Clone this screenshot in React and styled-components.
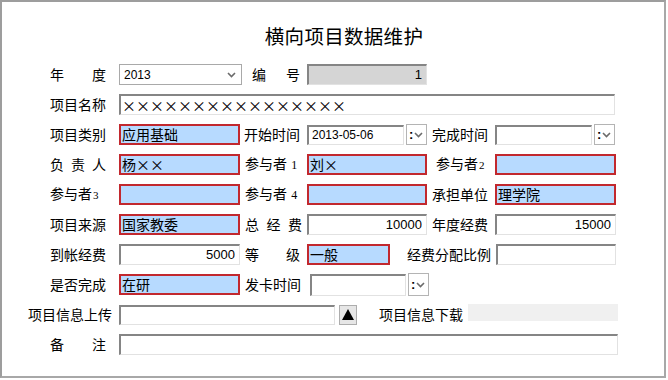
import React from "react";
import styled, { createGlobalStyle } from "styled-components";

const GlobalStyle = createGlobalStyle`
  body {
    margin: 0;
    background: #ffffff;
    font-family: "Noto Sans CJK SC", "Liberation Sans", sans-serif;
  }
`;

const Chevron = () => (
  <svg width="9" height="6" viewBox="0 0 9 6">
    <path d="M1 1 L4.5 4.5 L8 1" fill="none" stroke="#6b6b6b" strokeWidth="1.6" />
  </svg>
);

function App() {
  return (
    <>
      <GlobalStyle />
      <Frame>
        <Title>横向项目数据维护</Title>
        <Form>
          <Row>
            <Label $ml={48} $spread>
              <span>年</span>
              <span>度</span>
            </Label>
            <Select $ml={13} $w={123}>
              <span>2013</span>
              <Chevron />
            </Select>
            <Label $ml={10} $w={48} $spread>
              <span>编</span>
              <span>号</span>
            </Label>
            <Field $ml={7} $w={120} $num $tone="grey" readOnly defaultValue="1" />
          </Row>

          <Row>
            <Label $ml={48}>项目名称</Label>
            <Field $ml={13} $w={496} $cross readOnly defaultValue="××××××××××××××××" />
          </Row>

          <Row>
            <Label $ml={48}>项目类别</Label>
            <Field $ml={13} $tone="blue" readOnly defaultValue="应用基础" />
            <Label $ml={4}>开始时间</Label>
            <Field $ml={7} $w={97} $h={20} $date readOnly defaultValue="2013-05-06" />
            <DropButton $ml={2}>
              <span>:</span>
              <Chevron />
            </DropButton>
            <Label $ml={5}>完成时间</Label>
            <Field $ml={7} $w={97} $h={20} readOnly defaultValue="" />
            <DropButton $ml={2}>
              <span>:</span>
              <Chevron />
            </DropButton>
          </Row>

          <Row>
            <Label $ml={48} $spread>
              <span>负</span>
              <span>责</span>
              <span>人</span>
            </Label>
            <Field $ml={13} $tone="blue" $cross readOnly defaultValue="杨××" />
            <Label $ml={5} $w={55}>
              参与者 <Digit $size={12}>1</Digit>
            </Label>
            <Field $ml={7} $w={120} $tone="blue" $cross readOnly defaultValue="刘×" />
            <Label $ml={9} $w={52}>
              参与者<Digit>2</Digit>
            </Label>
            <Field $ml={7} $tone="blue" readOnly defaultValue="" />
          </Row>

          <Row>
            <Label $ml={48}>
              参与者<Digit>3</Digit>
            </Label>
            <Field $ml={13} $tone="blue" readOnly defaultValue="" />
            <Label $ml={5} $w={55}>
              参与者 <Digit $size={12}>4</Digit>
            </Label>
            <Field $ml={7} $w={120} $tone="blue" readOnly defaultValue="" />
            <Label $ml={5}>承担单位</Label>
            <Field $ml={7} $tone="blue" readOnly defaultValue="理学院" />
          </Row>

          <Row>
            <Label $ml={48}>项目来源</Label>
            <Field $ml={13} $tone="blue" readOnly defaultValue="国家教委" />
            <Label $ml={5} $w={57} $spread>
              <span>总</span>
              <span>经</span>
              <span>费</span>
            </Label>
            <Field $ml={5} $w={120} $num readOnly defaultValue="10000" />
            <Label $ml={5}>年度经费</Label>
            <Field $ml={7} $num readOnly defaultValue="15000" />
          </Row>

          <Row>
            <Label $ml={48}>到帐经费</Label>
            <Field $ml={13} $num readOnly defaultValue="5000" />
            <Label $ml={5} $w={55} $spread>
              <span>等</span>
              <span>级</span>
            </Label>
            <Field $ml={7} $w={83} $tone="blue" readOnly defaultValue="一般" />
            <Label $ml={17} $w={84}>经费分配比例</Label>
            <Field $ml={5} $w={120} readOnly defaultValue="" />
          </Row>

          <Row>
            <Label $ml={48}>是否完成</Label>
            <Field $ml={13} $tone="blue" readOnly defaultValue="在研" />
            <Label $ml={5} $w={57}>发卡时间</Label>
            <Field $ml={8} $w={96} $h={22} readOnly defaultValue="" />
            <DropButton $ml={2} $h={23}>
              <span>:</span>
              <Chevron />
            </DropButton>
          </Row>

          <Row>
            <Label $ml={26} $w={86}>项目信息上传</Label>
            <Field $ml={5} $w={216} $h={20} readOnly defaultValue="" />
            <UploadButton $ml={4}>
              <svg width="12" height="11" viewBox="0 0 12 11">
                <path d="M6 0 L12 11 L0 11 Z" fill="#000" />
              </svg>
            </UploadButton>
            <Label $ml={22} $w={84}>项目信息下载</Label>
            <Placeholder $ml={5} />
          </Row>

          <Row>
            <Label $ml={48} $spread>
              <span>备</span>
              <span>注</span>
            </Label>
            <Field $ml={13} $w={499} readOnly defaultValue="" />
          </Row>
        </Form>
      </Frame>
    </>
  );
}

const Frame = styled.div`
  width: 666px;
  height: 378px;
  box-sizing: border-box;
  border: 2px solid #9d9d9d;
  border-right-color: #a8a8a8;
  border-bottom-color: #a8a8a8;
  background: #ffffff;
  color: #000000;
`;

const Title = styled.h1`
  margin: 24px 0 0 22px;
  font-size: 19.5px;
  line-height: 20px;
  font-weight: 400;
  text-align: center;
  letter-spacing: 0.3px;
`;

const Form = styled.div`
  margin-top: 18px;
  display: flex;
  flex-direction: column;
  gap: 9px;
`;

const Row = styled.div`
  height: 21px;
  display: flex;
  align-items: center;
`;

const Label = styled.div`
  flex: none;
  margin-left: ${(p) => p.$ml || 0}px;
  width: ${(p) => p.$w || 56}px;
  display: ${(p) => (p.$spread ? "flex" : "block")};
  justify-content: space-between;
  font-size: 14px;
  line-height: 21px;
  white-space: pre;
`;

const Digit = styled.span`
  font-family: "Liberation Serif", serif;
  font-size: ${(p) => p.$size || 11}px;
  margin-left: 1px;
`;

const tones = {
  white: "#ffffff",
  grey: "#d5d5d5",
  blue: "#b7daff",
};

const Field = styled.input`
  flex: none;
  box-sizing: border-box;
  margin: 0 0 0 ${(p) => p.$ml || 0}px;
  width: ${(p) => p.$w || 121}px;
  height: ${(p) => p.$h || 21}px;
  padding: 0 ${(p) => (p.$num ? 4 : 1)}px 1px ${(p) => (p.$date ? 3 : 1)}px;
  background: ${(p) => tones[p.$tone || "white"]};
  border-style: solid;
  border-width: ${(p) => (p.$tone === "blue" ? "2px" : "2px 1px 1px 2px")};
  border-color: ${(p) =>
    p.$tone === "blue"
      ? "#c2282e"
      : "#858585 #e2e2e2 #e2e2e2 #858585"};
  color: #000000;
  outline: none;
  font-family: ${(p) =>
    p.$num || p.$date
      ? `"Liberation Sans", sans-serif`
      : `"Noto Sans CJK SC", sans-serif`};
  font-size: ${(p) => (p.$num ? 13 : p.$date ? 12 : 14)}px;
  font-feature-settings: ${(p) => (p.$cross ? `"fwid"` : "normal")};
  text-align: ${(p) => (p.$num ? "right" : "left")};
`;

const Select = styled.div`
  flex: none;
  box-sizing: border-box;
  margin-left: ${(p) => p.$ml || 0}px;
  width: ${(p) => p.$w}px;
  height: 21px;
  padding: 0 5px 0 4px;
  display: flex;
  align-items: center;
  justify-content: space-between;
  border: 1px solid #a9a9a9;
  background: #ffffff;
  font-family: "Liberation Sans", sans-serif;
  font-size: 12px;
`;

const DropButton = styled.div`
  flex: none;
  box-sizing: border-box;
  margin-left: ${(p) => p.$ml || 0}px;
  width: 21px;
  height: ${(p) => p.$h || 21}px;
  padding: 0 3px 0 2px;
  display: flex;
  align-items: center;
  justify-content: space-between;
  border: 1px solid #b4b4b4;
  background: #ffffff;
  font-family: "Liberation Sans", sans-serif;
  font-size: 13px;
  font-weight: 700;
`;

const UploadButton = styled.div`
  flex: none;
  box-sizing: border-box;
  margin-left: ${(p) => p.$ml || 0}px;
  width: 18px;
  height: 20px;
  display: flex;
  align-items: center;
  justify-content: center;
  border: 1px solid #adadad;
  background: #e6e6e6;
`;

const Placeholder = styled.div`
  flex: none;
  align-self: flex-start;
  margin-left: ${(p) => p.$ml || 0}px;
  width: 150px;
  height: 17px;
  background: #f0f0f0;
`;

export default App;
